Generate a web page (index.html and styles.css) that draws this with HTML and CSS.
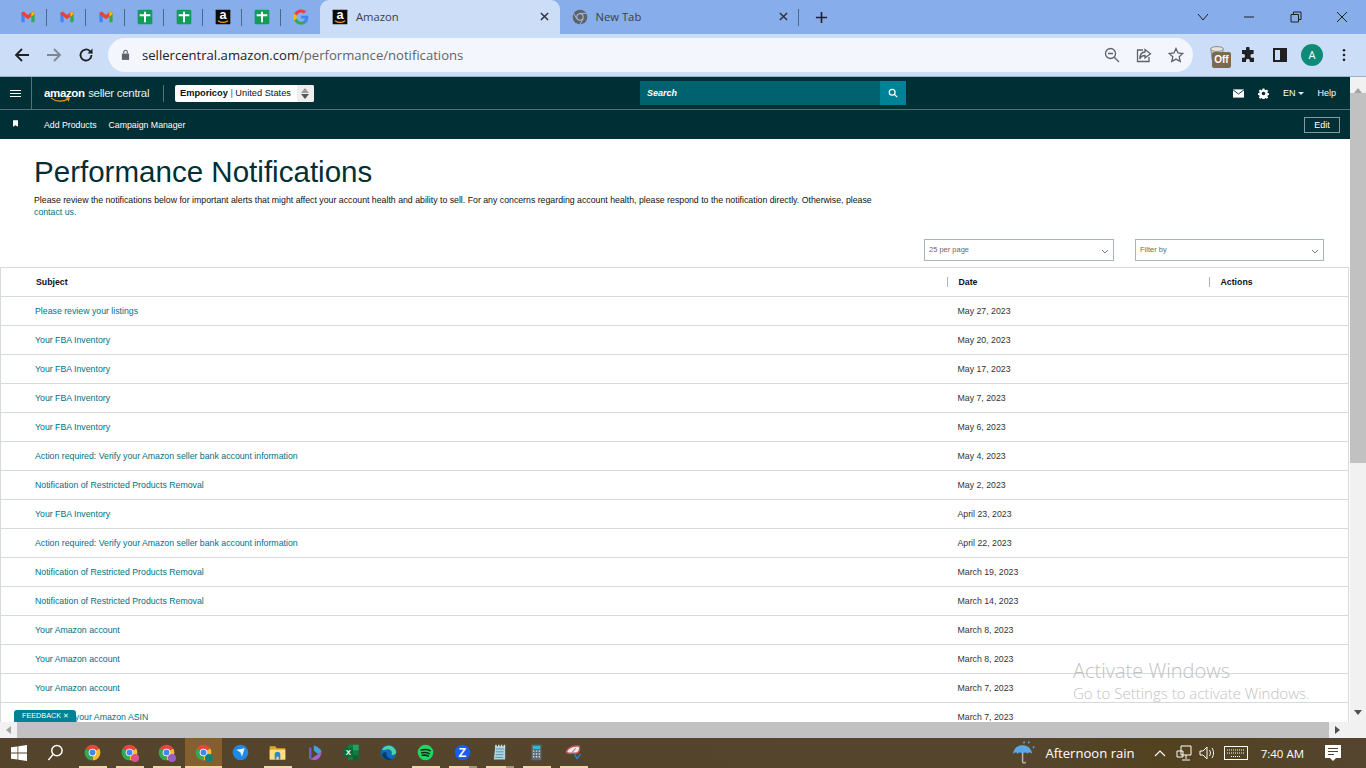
FILE: index.html
```html
<!DOCTYPE html>
<html lang="en">
<head>
    <meta charset="UTF-8">
    <meta name="viewport" content="width=device-width, initial-scale=1.0">
    <title>Performance Notifications</title>
    <link rel="stylesheet" href="styles.css">
</head>
<body>
    <svg class="defs" width="0" height="0">
        <symbol id="gmail" viewBox="0 0 24 24">
            <path fill="#4285f4" d="M2 7h5v13H3.500A1.500 1.500 0 0 1 2 18.500z"/>
            <path fill="#34a853" d="M17 7h5v11.500a1.500 1.500 0 0 1-1.500 1.500H17z"/>
            <path fill="#ea4335" d="M2 7.500C2 4.800 5 3.300 7 5l5 4 5-4c2-1.700 5-.2 5 2.500L17 11.500l-5 4-5-4z"/>
            <path fill="#fbbc04" d="M17 5.200c2-1.500 5-.1 5 2.300l-5 4z"/>
        </symbol>
        <symbol id="tasks" viewBox="0 0 24 24">
            <rect x="1" y="1" width="22" height="22" rx="2" fill="#0f9d58"/>
            <path fill="#fff" d="M10.500 4h3v4H20v3h-6.500v9h-3v-9H4V8h6.500z"/>
        </symbol>
        <symbol id="google" viewBox="0 0 24 24">
            <path fill="#4285f4" d="M23 12.300c0-.8-.1-1.600-.2-2.300H12v4.400h6.200a5.300 5.300 0 0 1-2.300 3.500v2.800h3.700c2.100-2 3.400-4.900 3.400-8.400z"/>
            <path fill="#34a853" d="M12 23.500c3.100 0 5.700-1 7.600-2.800l-3.700-2.800c-1 .7-2.400 1.100-3.900 1.100-3 0-5.500-2-6.400-4.700H1.800V17a11.500 11.500 0 0 0 10.200 6.500z"/>
            <path fill="#fbbc05" d="M5.600 14.300a6.900 6.900 0 0 1 0-4.400V7H1.800a11.500 11.500 0 0 0 0 10.300z"/>
            <path fill="#ea4335" d="M12 5.100c1.700 0 3.200.6 4.400 1.700l3.300-3.300A11.500 11.500 0 0 0 1.800 7l3.800 2.900C6.500 7.100 9 5.100 12 5.100z"/>
        </symbol>
        <symbol id="chrome" viewBox="0 0 24 24">
            <path fill="#e8453c" d="M12 12 2.470 6.500a11 11 0 0 1 19.060 0z"/>
            <path fill="#f9bb2d" d="M12 12l9.530-5.500A11 11 0 0 1 12 23z"/>
            <path fill="#34a853" d="M12 12v11A11 11 0 0 1 2.470 6.500z"/>
            <circle cx="12" cy="12" r="5.400" fill="#fff"/>
            <circle cx="12" cy="12" r="4.200" fill="#4285f4"/>
        </symbol>
    </svg>

    <div class="tab-strip">
        <div class="pin"><svg class="fav"><use href="#gmail"/></svg></div>
        <div class="pin"><svg class="fav"><use href="#gmail"/></svg></div>
        <div class="pin"><svg class="fav"><use href="#gmail"/></svg></div>
        <div class="pin"><svg class="fav"><use href="#tasks"/></svg></div>
        <div class="pin"><svg class="fav"><use href="#tasks"/></svg></div>
        <div class="pin">
            <svg class="fav" viewBox="0 0 24 24">
                <rect x="1" y="1" width="22" height="22" rx="1" fill="#0c0c0c"/>
                <text x="12" y="15" text-anchor="middle" font-family="Liberation Sans, sans-serif" font-size="19" font-weight="700" fill="#fff">a</text>
                <path fill="none" stroke="#f29b1d" stroke-width="1.800" stroke-linecap="round" d="M5 18c4 2.500 10 2.500 14 0"/>
            </svg>
        </div>
        <div class="pin"><svg class="fav"><use href="#tasks"/></svg></div>
        <div class="pin last"><svg class="fav"><use href="#google"/></svg></div>
        <div class="tab active">
            <svg class="fav" viewBox="0 0 24 24">
                <rect x="1" y="1" width="22" height="22" rx="1" fill="#0c0c0c"/>
                <text x="12" y="15" text-anchor="middle" font-family="Liberation Sans, sans-serif" font-size="19" font-weight="700" fill="#fff">a</text>
                <path fill="none" stroke="#f29b1d" stroke-width="1.800" stroke-linecap="round" d="M5 18c4 2.500 10 2.500 14 0"/>
            </svg>
            <span class="tab-title">Amazon</span>
            <svg class="tab-close" viewBox="0 0 10 10"><path d="M1 1l8 8M9 1l-8 8"/></svg>
        </div>
        <div class="tab">
            <svg class="fav" viewBox="0 0 24 24">
                <circle cx="12" cy="12" r="11" fill="#5f6368"/>
                <circle cx="12" cy="12" r="5.500" fill="#a9c3ee"/>
                <circle cx="12" cy="12" r="4" fill="#5f6368"/>
                <path fill="none" stroke="#a9c3ee" stroke-width="1.300" d="M12 6.500h10M7.200 14.800L2.500 6.500M16.800 14.800L12 23"/>
            </svg>
            <span class="tab-title">New Tab</span>
            <svg class="tab-close" viewBox="0 0 10 10"><path d="M1 1l8 8M9 1l-8 8"/></svg>
        </div>
        <svg class="new-tab" viewBox="0 0 14 14"><path d="M7 1v12M1 7h12"/></svg>
        <div class="window-btns">
            <svg viewBox="0 0 12 8"><path d="M1 1l5 6 5-6"/></svg>
            <svg viewBox="0 0 12 8"><path d="M1 4h10"/></svg>
            <svg viewBox="0 0 12 12"><path d="M1 3.500h7.500V11H1zM3.500 3.500V1H11v7.500H8.500"/></svg>
            <svg viewBox="0 0 12 12"><path d="M1 1l10 10M11 1L1 11"/></svg>
        </div>
    </div>

    <div class="toolbar">
        <svg class="tool-icon" viewBox="0 0 16 16"><path d="M15 8H2M8 2L2 8l6 6"/></svg>
        <svg class="tool-icon off" viewBox="0 0 16 16"><path d="M1 8h13M8 2l6 6-6 6"/></svg>
        <svg class="tool-icon" viewBox="0 0 16 16"><path d="M13.500 8a5.500 5.500 0 1 1-1.600-3.900L14 6"/><path class="solid" d="M14.500 1.500v5h-5z"/></svg>
        <div class="omnibox">
            <svg class="lock" viewBox="0 0 10 12"><path d="M1 5h8v7H1z"/><path class="ring" d="M3 5V3.300a2 2 0 0 1 4 0V5"/></svg>
            <span class="url">sellercentral.amazon.com<span class="url-path">/performance/notifications</span></span>
            <div class="omni-icons">
                <svg viewBox="0 0 16 16"><circle cx="6.500" cy="6.500" r="5"/><path d="M10.200 10.200L15 15M4 6.500h5"/></svg>
                <svg viewBox="0 0 16 16"><path d="M7 3H1.500v11.500H13V10M9 2.500l5.500 4.200L9 11V8.500C6 8.500 4.500 10 3.800 12c0-4 2-6.800 5.200-7z"/></svg>
                <svg viewBox="0 0 16 16"><path d="M8 1.500l2 4.500 4.800.5-3.600 3.200 1 4.800L8 12.100l-4.200 2.400 1-4.800L1.200 6.500 6 6z"/></svg>
            </div>
        </div>
        <div class="ext-off">
            <svg class="cup" viewBox="0 0 16 14"><path d="M2 4h12l-1 10H3z"/><ellipse cx="8" cy="3.500" rx="6.500" ry="2.400"/></svg>
            <span class="off-badge">Off</span>
        </div>
        <svg class="puzzle" viewBox="0 0 16 16"><path d="M6 1.500a1.800 1.800 0 0 1 3.600 0V3h4v4h-1.300a1.900 1.900 0 0 0 0 3.800H14V15H9.800v-1.300a1.900 1.900 0 0 0-3.800 0V15H2v-4.200h1.200a1.900 1.900 0 0 0 0-3.800H2V3h4z"/></svg>
        <svg class="side-panel" viewBox="0 0 14 14"><path d="M0 0h14v14H0zM2 2v10h5V2z" fill-rule="evenodd"/></svg>
        <span class="avatar">A</span>
        <svg class="kebab" viewBox="0 0 4 16"><circle cx="2" cy="2.500" r="1.500"/><circle cx="2" cy="8" r="1.500"/><circle cx="2" cy="13.500" r="1.500"/></svg>
    </div>

    <div class="viewport">
        <div class="page">
            <div class="nav-top">
                <div class="burger"><span></span><span></span><span></span></div>
                <div class="logo">
                    <span class="logo-amazon">amazon</span> <span class="logo-rest">seller central</span>
                    <svg class="logo-smile" viewBox="0 0 24 7"><path d="M1 1c6 5 15 5 21 1M19 1l4 0-1 4"/></svg>
                </div>
                <div class="account">
                    <span class="account-text"><b>Emporicoy</b> <i>|</i> United States</span>
                    <span class="account-arrows"></span>
                </div>
                <div class="search">
                    <span class="search-input">Search</span>
                    <span class="search-btn">
                        <svg viewBox="0 0 12 12"><circle cx="5" cy="5" r="3.500"/><path d="M7.500 7.500L11 11"/></svg>
                    </span>
                </div>
                <div class="nav-right">
                    <svg class="nav-mail" viewBox="0 0 12 9"><path fill="#fff" d="M0 0h12v9H0z"/><path fill="none" stroke="#002f36" d="M0 .5l6 4.500 6-4.500"/></svg>
                    <svg class="nav-gear" viewBox="0 0 24 24"><path fill="#fff" d="M10 1h4l.6 3 2.200.9 2.600-1.700 2.800 2.800-1.700 2.600.9 2.200 3 .6v4l-3 .6-.9 2.200 1.700 2.600-2.800 2.800-2.600-1.700-2.200.9-.6 3h-4l-.6-3-2.200-.9-2.600 1.700-2.800-2.800 1.700-2.600-.9-2.200-3-.6v-4l3-.6.9-2.200-1.700-2.600 2.800-2.800 2.600 1.700 2.200-.9zM12 8a4 4 0 1 0 0 8 4 4 0 0 0 0-8z" fill-rule="evenodd"/></svg>
                    <span class="nav-lang">EN<span class="caret"></span></span>
                    <span class="nav-help">Help</span>
                </div>
            </div>
            <div class="nav-sub">
                <svg class="bookmark" viewBox="0 0 6 8"><path d="M0 0h6v8L3 6 0 8z"/></svg>
                <a class="sub-link" href="#">Add Products</a>
                <a class="sub-link" href="#">Campaign Manager</a>
                <span class="edit-btn">Edit</span>
            </div>

            <div class="heading">
                <h1>Performance Notifications</h1>
                <p>Please review the notifications below for important alerts that might affect your account health and ability to sell. For any concerns regarding account health, please respond to the notification directly. Otherwise, please <a href="#">contact us.</a></p>
            </div>

            <div class="filters">
                <div class="select per-page"><span>25 per page</span><svg viewBox="0 0 8 5"><path d="M1 1l3 3 3-3"/></svg></div>
                <div class="select"><span>Filter by</span><svg viewBox="0 0 8 5"><path d="M1 1l3 3 3-3"/></svg></div>
            </div>

            <table class="notices">
                <colgroup><col class="col-subject"><col class="col-date"><col></colgroup>
                <thead>
                    <tr><th>Subject</th><th><span>Date</span></th><th><span>Actions</span></th></tr>
                </thead>
                <tbody>
                    <tr><td><a href="#">Please review your listings</a></td><td>May 27, 2023</td><td></td></tr>
                    <tr><td><a href="#">Your FBA Inventory</a></td><td>May 20, 2023</td><td></td></tr>
                    <tr><td><a href="#">Your FBA Inventory</a></td><td>May 17, 2023</td><td></td></tr>
                    <tr><td><a href="#">Your FBA Inventory</a></td><td>May 7, 2023</td><td></td></tr>
                    <tr><td><a href="#">Your FBA Inventory</a></td><td>May 6, 2023</td><td></td></tr>
                    <tr><td><a href="#">Action required: Verify your Amazon seller bank account information</a></td><td>May 4, 2023</td><td></td></tr>
                    <tr><td><a href="#">Notification of Restricted Products Removal</a></td><td>May 2, 2023</td><td></td></tr>
                    <tr><td><a href="#">Your FBA Inventory</a></td><td>April 23, 2023</td><td></td></tr>
                    <tr><td><a href="#">Action required: Verify your Amazon seller bank account information</a></td><td>April 22, 2023</td><td></td></tr>
                    <tr><td><a href="#">Notification of Restricted Products Removal</a></td><td>March 19, 2023</td><td></td></tr>
                    <tr><td><a href="#">Notification of Restricted Products Removal</a></td><td>March 14, 2023</td><td></td></tr>
                    <tr><td><a href="#">Your Amazon account</a></td><td>March 8, 2023</td><td></td></tr>
                    <tr><td><a href="#">Your Amazon account</a></td><td>March 8, 2023</td><td></td></tr>
                    <tr><td><a href="#">Your Amazon account</a></td><td>March 7, 2023</td><td></td></tr>
                    <tr><td><a href="#">Notice for your Amazon ASIN</a></td><td>March 7, 2023</td><td></td></tr>
                </tbody>
            </table>

            <div class="feedback">FEEDBACK <span>✕</span></div>
            <div class="activate">
                <div class="activate-title">Activate Windows</div>
                <div class="activate-sub">Go to Settings to activate Windows.</div>
            </div>
        </div>
        <div class="vscroll">
            <span class="arrow-up"></span>
            <div class="vthumb"></div>
            <span class="arrow-down"></span>
        </div>
    </div>
    <div class="hscroll">
        <span class="arrow-left"></span>
        <div class="hthumb"></div>
        <span class="arrow-right"></span>
    </div>

    <div class="taskbar">
        <div class="slot"><svg viewBox="0 0 16 16" class="win"><path fill="#fff" d="M0 2.300l6.500-.9v6.200H0zM7.300 1.300L16 0v7.600H7.300zM0 8.400h6.500v6.200L0 13.700zM7.300 8.400H16V16l-8.700-1.200z"/></svg></div>
        <div class="slot"><svg viewBox="0 0 18 18" class="lens"><circle cx="10.500" cy="7" r="5.500"/><path d="M6.500 11L1.500 17"/></svg></div>
        <div class="slot run"><svg class="app"><use href="#chrome"/></svg></div>
        <div class="slot run"><svg class="app"><use href="#chrome"/></svg><span class="badge pink"></span></div>
        <div class="slot run"><svg class="app"><use href="#chrome"/></svg><span class="badge purple"></span></div>
        <div class="slot run current"><svg class="app"><use href="#chrome"/></svg><span class="badge teal"></span></div>
        <div class="slot"><svg class="app" viewBox="0 0 24 24"><circle cx="12" cy="12" r="11" fill="#1e88e5"/><path fill="#e3f2fd" d="M6 8l12-2-4 12-2-6z"/></svg></div>
        <div class="slot run"><svg class="app" viewBox="0 0 24 24"><path fill="#e0a526" d="M1 3h8l2 3h12v16H1z"/><path fill="#ffdf80" d="M1 8h22v14H1z"/><path fill="#2f86d6" d="M8 15a4 4 0 0 1 8 0v7h-2.500v-4h-3v4H8z"/></svg></div>
        <div class="slot"><svg class="app" viewBox="0 0 24 24"><path fill="none" stroke="#6f5fc9" stroke-width="3.500" d="M6 21V5"/><path fill="#3ba7e0" d="M11 2c5 1 10 5 11 9l-5 3-6-5z"/><path fill="#a463cf" d="M6 22l11-8 5-3c0 6-4 11-9 12z"/></svg></div>
        <div class="slot"><svg class="app" viewBox="0 0 24 24"><path fill="#107c41" d="M7 1h15v22H7z"/><path fill="#21a366" d="M14 1h8v8h-8z"/><path fill="#185c37" d="M14 16h8v7h-8z"/><rect x="1" y="6" width="13" height="12" fill="#0b6a36"/><text x="7.500" y="16" text-anchor="middle" font-family="Liberation Sans, sans-serif" font-size="11" font-weight="700" fill="#fff">X</text></svg></div>
        <div class="slot"><svg class="app" viewBox="0 0 24 24"><circle cx="12" cy="12" r="11" fill="#0f6cbd"/><path fill="#4fd1a1" d="M3 8C6 0 20 0 23 11c0 4-4 5-7 4 3-5-3-9-8-7-2 .6-4 1-5 0z"/><path fill="#083b6b" d="M9 12c-1 5 3 9 9 9-6 4-15 0-15-7 1-2 4-3 6-2z"/></svg></div>
        <div class="slot run"><svg class="app" viewBox="0 0 24 24"><circle cx="12" cy="12" r="11" fill="#1ed760"/><path fill="none" stroke="#10291a" stroke-width="2.200" stroke-linecap="round" d="M6 8.500c4-1 9-1 12.500 1M6.800 12.500c3.500-.8 7.500-.6 10.500 1M7.500 16c3-.6 6-.4 8.500 1"/></svg></div>
        <div class="slot run stacked"><svg class="app" viewBox="0 0 24 24"><circle cx="12" cy="12" r="11" fill="#1a5cf0"/><text x="12" y="18.500" text-anchor="middle" font-family="Liberation Sans, sans-serif" font-size="18" font-weight="700" fill="#fff">Z</text></svg></div>
        <div class="slot run stacked"><svg class="app" viewBox="0 0 24 24"><path fill="#a9d6e8" d="M6 3h14v19H4z"/><path stroke="#55798a" fill="none" d="M7 7h11M7 11h11M6.500 15h11M6 19h11"/><path stroke="#d5dde2" stroke-width="2" d="M7 1v4M11 1v4M15 1v4M19 1v4"/></svg></div>
        <div class="slot run"><svg class="app" viewBox="0 0 24 24"><rect x="5" y="1" width="14" height="22" fill="#5d6b75"/><rect x="7" y="3" width="10" height="4" fill="#35b7e8"/><path stroke="#d8dde0" stroke-width="2" stroke-dasharray="2 2" d="M7 10h10M7 14h10M7 18h10"/></svg></div>
        <div class="slot run"><svg class="app" viewBox="0 0 24 24"><path fill="#f1e9e7" stroke="#c9505b" stroke-width="2" d="M2 11C4 5 12 2 20 3c2 4 0 9-4 10H6c-2 0-4-1-4-2z"/><path stroke="#8a8a8a" stroke-width="1.500" d="M10 12l5-6"/><path stroke="#2a7de1" stroke-width="2" fill="none" d="M13 13l4 8M22 14l-5 7"/></svg></div>
        <div class="tray">
            <svg class="umbrella" viewBox="0 0 26 26">
                <path fill="#5aa9e6" d="M1 14C2 7 7 5 11 5s9 2 10 9c-2-2-4-2-5 0-1-2-3-2-5 0-2-2-4-2-5 0-1-2-3-2-5 0z"/>
                <path fill="none" stroke="#b9b9b9" stroke-width="1.500" d="M11 13v9c0 2 3 2 3 0"/>
                <path stroke="#5aa9e6" stroke-width="1.500" d="M13 1l-1 2M18 1l-1 2M23 6l-1 2"/>
            </svg>
            <span class="weather">Afternoon rain</span>
            <svg class="tray-up" viewBox="0 0 12 7"><path d="M1 6l5-5 5 5"/></svg>
            <svg class="tray-net" viewBox="0 0 16 16"><path d="M5 1h10v9H5zM1 6h6v6H1zM10 10v4M6 15h8"/></svg>
            <svg class="tray-vol" viewBox="0 0 16 16"><path d="M1 6h3l4-4v12l-4-4H1zM10.500 5c1.200 1.800 1.200 4.200 0 6M13 3c2 3 2 7 0 10"/></svg>
            <svg class="tray-kbd" viewBox="0 0 24 14"><rect x=".5" y=".5" width="23" height="13"/><path stroke-dasharray="1 1" d="M3 4h18M3 7h18M7 10.500h10"/></svg>
            <span class="clock">7:40 AM</span>
            <svg class="notify" viewBox="0 0 16 16"><path fill="#fff" d="M0 0h16v13h-5l-3 3-3-3H0z"/><path stroke="#54442b" d="M3 3.500h10M3 6.500h10M3 9.500h6"/></svg>
        </div>
    </div>
</body>
</html>
```

FILE: styles.css
```css
* {
    box-sizing: border-box;
}
html, body {
    margin: 0;
    height: 100%;
    overflow: hidden;
}
body {
    width: 1366px;
    height: 768px;
    display: flex;
    flex-direction: column;
    font-family: "Liberation Sans", Arial, sans-serif;
    background: #fff;
}
a {
    color: #007185;
    text-decoration: none;
}
.defs {
    position: absolute;
}

/* browser tabs */
.tab-strip {
    height: 34px;
    flex: none;
    display: flex;
    align-items: stretch;
    padding-left: 8px;
    background: #87adeb;
    font-family: "Open Sans", sans-serif;
    font-size: 11.250px;
    color: #3c4043;
}
.pin {
    width: 39px;
    display: flex;
    align-items: center;
    justify-content: center;
    position: relative;
}
.pin::after {
    content: "";
    position: absolute;
    right: 0;
    top: 9px;
    height: 17px;
    width: 1px;
    background: #50678c;
}
.pin.last::after {
    display: none;
}
.fav {
    width: 16px;
    height: 16px;
    flex: none;
}
.tab {
    width: 239.500px;
    display: flex;
    align-items: center;
    padding: 0 12px 1px 12px;
    gap: 8px;
    position: relative;
}
.tab.active {
    background: #cbddf7;
    border-radius: 9px 9px 0 0;
}
.tab:not(.active)::after {
    content: "";
    position: absolute;
    right: 0;
    top: 9px;
    height: 17px;
    width: 1px;
    background: #50678c;
}
.tab-title {
    flex: 1;
}
.tab-close {
    width: 9px;
    height: 9px;
    margin-right: -1px;
    fill: none;
    stroke: #2c3136;
    stroke-width: 1.600;
}
.new-tab {
    width: 13px;
    height: 13px;
    margin: 11px 0 0 16px;
    fill: none;
    stroke: #202124;
    stroke-width: 1.700;
}
.window-btns {
    margin-left: auto;
    display: flex;
    align-items: center;
    gap: 34.500px;
    padding-right: 18px;
}
.window-btns svg {
    width: 12px;
    height: 12px;
    fill: none;
    stroke: #202124;
    stroke-width: 1;
}

/* address bar */
.toolbar {
    height: 43px;
    flex: none;
    display: flex;
    align-items: center;
    padding: 0 0 1px 14px;
    background: #cbddf7;
    border-bottom: 1px solid #9fb0c4;
}
.tool-icon {
    width: 16px;
    height: 16px;
    margin-right: 16px;
    flex: none;
    fill: none;
    stroke: #202124;
    stroke-width: 1.800;
}
.tool-icon.off {
    stroke: #7d8794;
}
.tool-icon .solid {
    fill: #202124;
    stroke: none;
}
.omnibox {
    width: 1085px;
    height: 34px;
    margin-left: -2px;
    display: flex;
    align-items: center;
    padding: 0 9px 0 13px;
    border-radius: 17px;
    background: #f3f7fd;
    font-family: "Open Sans", sans-serif;
    font-size: 13.100px;
    color: #202124;
}
.lock {
    width: 9px;
    height: 11px;
    margin-right: 12px;
    fill: #5f6368;
}
.lock .ring {
    fill: none;
    stroke: #5f6368;
    stroke-width: 1.300;
}
.url-path {
    color: #5f6368;
}
.omni-icons {
    margin-left: auto;
    display: flex;
    gap: 16px;
}
.omni-icons svg {
    width: 16px;
    height: 16px;
    fill: none;
    stroke: #5f6368;
    stroke-width: 1.300;
}
.ext-off {
    width: 24px;
    height: 26px;
    margin-left: 15px;
    position: relative;
    flex: none;
}
.cup {
    position: absolute;
    left: 1px;
    top: 3px;
    width: 16px;
    height: 15px;
    fill: #e3e3df;
    stroke: #8a8a84;
    stroke-width: 1;
}
.off-badge {
    position: absolute;
    left: 4px;
    bottom: 0;
    width: 19px;
    height: 16px;
    border-radius: 2px;
    background: #7c6a4f;
    color: #fff;
    font-size: 10px;
    font-weight: 700;
    line-height: 16px;
    text-align: center;
}
.puzzle {
    width: 16px;
    height: 16px;
    margin-left: 8px;
    fill: #202124;
}
.side-panel {
    width: 14px;
    height: 14px;
    margin-left: 17px;
    fill: #202124;
}
.avatar {
    width: 22px;
    height: 22px;
    margin-left: 14px;
    border-radius: 50%;
    background: #0f8a76;
    color: #fff;
    font-family: "Open Sans", sans-serif;
    font-size: 11px;
    line-height: 22px;
    text-align: center;
}
.kebab {
    width: 4px;
    height: 14px;
    margin-left: 19px;
    fill: #202124;
}

/* page + scrollbars */
.viewport {
    flex: 1;
    min-height: 0;
    display: flex;
}
.page {
    width: 1350px;
    flex: none;
    position: relative;
    overflow: hidden;
}
.vscroll {
    flex: 1;
    display: flex;
    flex-direction: column;
    align-items: center;
    padding: 11px 0 7px;
    background: #f1f1f1;
}
.vthumb {
    width: 100%;
    height: 370px;
    background: #c1c1c1;
}
.arrow-up, .arrow-down, .arrow-left, .arrow-right {
    width: 0;
    height: 0;
    flex: none;
    border: 4px solid transparent;
}
.arrow-up {
    border-top: 0;
    border-bottom: 5px solid #a3a3a3;
}
.arrow-down {
    margin-top: auto;
    border-bottom: 0;
    border-top: 5px solid #505050;
}
.hscroll {
    height: 16px;
    flex: none;
    display: flex;
    align-items: center;
    padding: 0 24px 0 6px;
    background: #f1f1f1;
}
.hthumb {
    width: 1312px;
    height: 16px;
    margin: 0 0 0 6px;
    background: #c1c1c1;
}
.arrow-left {
    border-left: 0;
    border-right: 5px solid #a3a3a3;
}
.arrow-right {
    margin-left: 6px;
    border-right: 0;
    border-left: 5px solid #505050;
}

/* seller central nav */
.nav-top {
    height: 33px;
    display: flex;
    align-items: center;
    background: #002f36;
    border-bottom: 1px solid #567176;
    color: #fff;
}
.burger {
    width: 32px;
    height: 32px;
    flex: none;
    display: flex;
    flex-direction: column;
    justify-content: center;
    gap: 2px;
    padding: 0 10px;
    border-right: 1px solid #567176;
}
.burger span {
    height: 1px;
    background: #fff;
}
.logo {
    width: 119px;
    margin-left: 12px;
    flex: none;
    position: relative;
    line-height: 14px;
    white-space: nowrap;
    padding-bottom: 2px;
}
.logo-amazon {
    font-size: 11.500px;
    font-weight: 700;
    letter-spacing: -.35px;
}
.logo-rest {
    margin-left: -1px;
    font-size: 11.500px;
    letter-spacing: -.3px;
    color: #e6ecec;
}
.logo-smile {
    position: absolute;
    left: 6px;
    top: 12px;
    width: 20px;
    height: 6px;
    fill: none;
    stroke: #f29b1d;
    stroke-width: 1.400;
}
.account {
    width: 139px;
    height: 17px;
    margin-left: 12px;
    flex: none;
    display: flex;
    align-items: center;
    position: relative;
    border-radius: 2px;
    background: #fff;
    color: #0f1111;
    font-size: 9.250px;
    white-space: nowrap;
}
.account::before {
    content: "";
    position: absolute;
    left: -12px;
    top: 0;
    height: 17px;
    width: 1px;
    background: #567176;
}
.account-text {
    padding-left: 5px;
    flex: 1;
}
.account-text i {
    font-style: normal;
    color: #007185;
}
.account-arrows {
    width: 17px;
    height: 17px;
    position: relative;
    border-radius: 0 2px 2px 0;
    background: #eeeeee;
}
.account-arrows::before, .account-arrows::after {
    content: "";
    position: absolute;
    left: 4px;
    border: 4px solid transparent;
}
.account-arrows::before {
    top: 0;
    border-top: 0;
    border-bottom: 5px solid #9a9a9a;
    margin-top: 3px;
}
.account-arrows::after {
    bottom: 3px;
    border-bottom: 0;
    border-top: 5px solid #555;
}
.search {
    width: 266px;
    height: 24px;
    margin-left: 326px;
    flex: none;
    display: flex;
}
.search-input {
    flex: 1;
    padding-left: 7px;
    background: #00626e;
    font-size: 9px;
    font-style: italic;
    font-weight: 700;
    line-height: 24px;
}
.search-btn {
    width: 26px;
    display: flex;
    align-items: center;
    justify-content: center;
    background: #008296;
}
.search-btn svg {
    width: 10px;
    height: 10px;
    fill: none;
    stroke: #fff;
    stroke-width: 1.500;
}
.nav-right {
    margin-left: auto;
    display: flex;
    align-items: center;
    padding-right: 14px;
    font-size: 9px;
}
.nav-mail {
    width: 11px;
    height: 9px;
    margin-right: 14px;
}
.nav-gear {
    width: 11px;
    height: 11px;
    margin-right: 14px;
}
.nav-lang {
    display: flex;
    align-items: center;
    margin-right: 13px;
}
.caret {
    margin-left: 3px;
    border: 3px solid transparent;
    border-top: 3px solid #dfe5e5;
    border-bottom: 0;
}
.nav-sub {
    height: 29px;
    display: flex;
    align-items: center;
    padding: 0 10px 0 13px;
    background: #002f36;
    color: #fff;
}
.bookmark {
    width: 5px;
    height: 7px;
    margin: -3px 26px 0 0;
    fill: #fff;
}
.sub-link {
    margin-right: 12px;
    color: #fff;
    font-size: 8.750px;
}
.edit-btn {
    width: 36px;
    height: 16px;
    margin-left: auto;
    border: 1px solid #8a9a9c;
    font-size: 9px;
    line-height: 14px;
    text-align: center;
}

/* heading + filters */
.heading {
    padding: 16px 0 0 34px;
}
.heading h1 {
    margin: 0;
    font-size: 29.560px;
    font-weight: 400;
    line-height: 33px;
    color: #002f36;
}
.heading p {
    width: 850px;
    margin: 6px 0 0;
    font-size: 8.750px;
    line-height: 12px;
    color: #0f1111;
}
.filters {
    display: flex;
    gap: 21px;
    justify-content: flex-end;
    padding: 21px 26px 0 0;
}
.select {
    width: 189px;
    height: 22px;
    display: flex;
    align-items: center;
    justify-content: space-between;
    padding: 0 4px 1px 4px;
    border: 1px solid #a6b5b7;
    font-size: 7.500px;
    color: #6b6b5f;
}
.per-page {
    width: 190px;
}
.select svg {
    width: 8px;
    height: 5px;
    margin-top: 3px;
    fill: none;
    stroke: #6f7f82;
}

/* table */
.notices {
    width: 1349px;
    margin-top: 6px;
    table-layout: fixed;
    border-collapse: collapse;
    border-top: 1px solid #d5dbdb;
    border-left: 1px solid #d5dbdb;
    border-right: 1px solid #d5dbdb;
    font-size: 8.750px;
}
.col-subject {
    width: 947px;
}
.col-date {
    width: 262px;
}
.notices th, .notices td {
    height: 29px;
    padding: 0 0 1px 34px;
    border-bottom: 1px solid #d5dbdb;
    text-align: left;
    white-space: nowrap;
}
.notices td + td {
    padding-left: 10px;
}
.notices th + th {
    padding-left: 10px;
}
.notices th {
    padding-left: 35px;
    padding-bottom: 0;
    color: #0f1111;
    font-weight: 700;
}
.notices th + th span {
    display: block;
    line-height: 10px;
    position: relative;
    padding-left: 1px;
}
.notices th + th span::before {
    content: "";
    position: absolute;
    left: -11px;
    top: 0;
    width: 1px;
    height: 10px;
    background: #aab7b8;
}
.notices td {
    color: #333;
}

/* overlays */
.feedback {
    position: absolute;
    left: 14px;
    bottom: 0;
    width: 62px;
    height: 12px;
    padding-left: 8px;
    border-radius: 3px 3px 0 0;
    background: #008296;
    color: #fff;
    font-size: 7.250px;
    line-height: 11px;
    white-space: nowrap;
}
.activate {
    position: absolute;
    left: 1073px;
    top: 582px;
    color: #c2c2c2;
    font-family: "Open Sans", sans-serif;
    white-space: nowrap;
}
.activate-title {
    font-size: 20px;
    font-weight: 300;
    line-height: 24px;
}
.activate-sub {
    font-size: 15px;
    font-weight: 300;
    line-height: 20px;
}

/* windows taskbar */
.taskbar {
    height: 30px;
    flex: none;
    display: flex;
    background: linear-gradient(90deg, #54442b 0%, #55452d 75%, #52421f 85%, #55452f 100%);
}
.slot {
    width: 37px;
    flex: none;
    display: flex;
    align-items: center;
    justify-content: center;
    padding-bottom: 1px;
    position: relative;
}
.slot.run::after {
    content: "";
    position: absolute;
    left: 5px;
    right: 4px;
    bottom: 0;
    height: 2px;
    background: #f4d4ae;
}
.slot.stacked::after {
    background: linear-gradient(90deg, #f4d4ae 70%, #a8987f 70%);
}
.slot.current {
    background: #85602e;
}
.slot.current::after {
    left: 0;
    right: 0;
}
.app {
    width: 17px;
    height: 17px;
}
.win {
    width: 16px;
    height: 16px;
}
.lens {
    width: 17px;
    height: 17px;
    fill: none;
    stroke: #fff;
    stroke-width: 1.600;
}
.badge {
    position: absolute;
    right: 9px;
    bottom: 6px;
    width: 8px;
    height: 8px;
    border-radius: 50%;
}
.pink {
    background: #e0508c;
}
.purple {
    background: #9a5cc6;
}
.teal {
    background: #12807a;
}
.tray {
    margin-left: auto;
    display: flex;
    align-items: center;
    padding-right: 25px;
    color: #fff;
    font-family: "Open Sans", sans-serif;
}
.tray svg {
    flex: none;
}
.umbrella {
    width: 25px;
    height: 26px;
}
.weather {
    margin-left: 8.500px;
    font-size: 13.100px;
}
.tray-up {
    width: 12px;
    height: 7px;
    margin-left: 19px;
    fill: none;
    stroke: #fff;
    stroke-width: 1.100;
}
.tray-net {
    width: 16px;
    height: 16px;
    margin-left: 10px;
    fill: none;
    stroke: #fff;
}
.tray-vol {
    width: 16px;
    height: 16px;
    margin-left: 7px;
    fill: none;
    stroke: #fff;
}
.tray-kbd {
    width: 24px;
    height: 14px;
    margin-left: 9px;
    fill: none;
    stroke: #fff;
}
.clock {
    margin-left: 13px;
    font-size: 11.500px;
}
.notify {
    width: 16px;
    height: 16px;
    margin-left: 21px;
}
```
